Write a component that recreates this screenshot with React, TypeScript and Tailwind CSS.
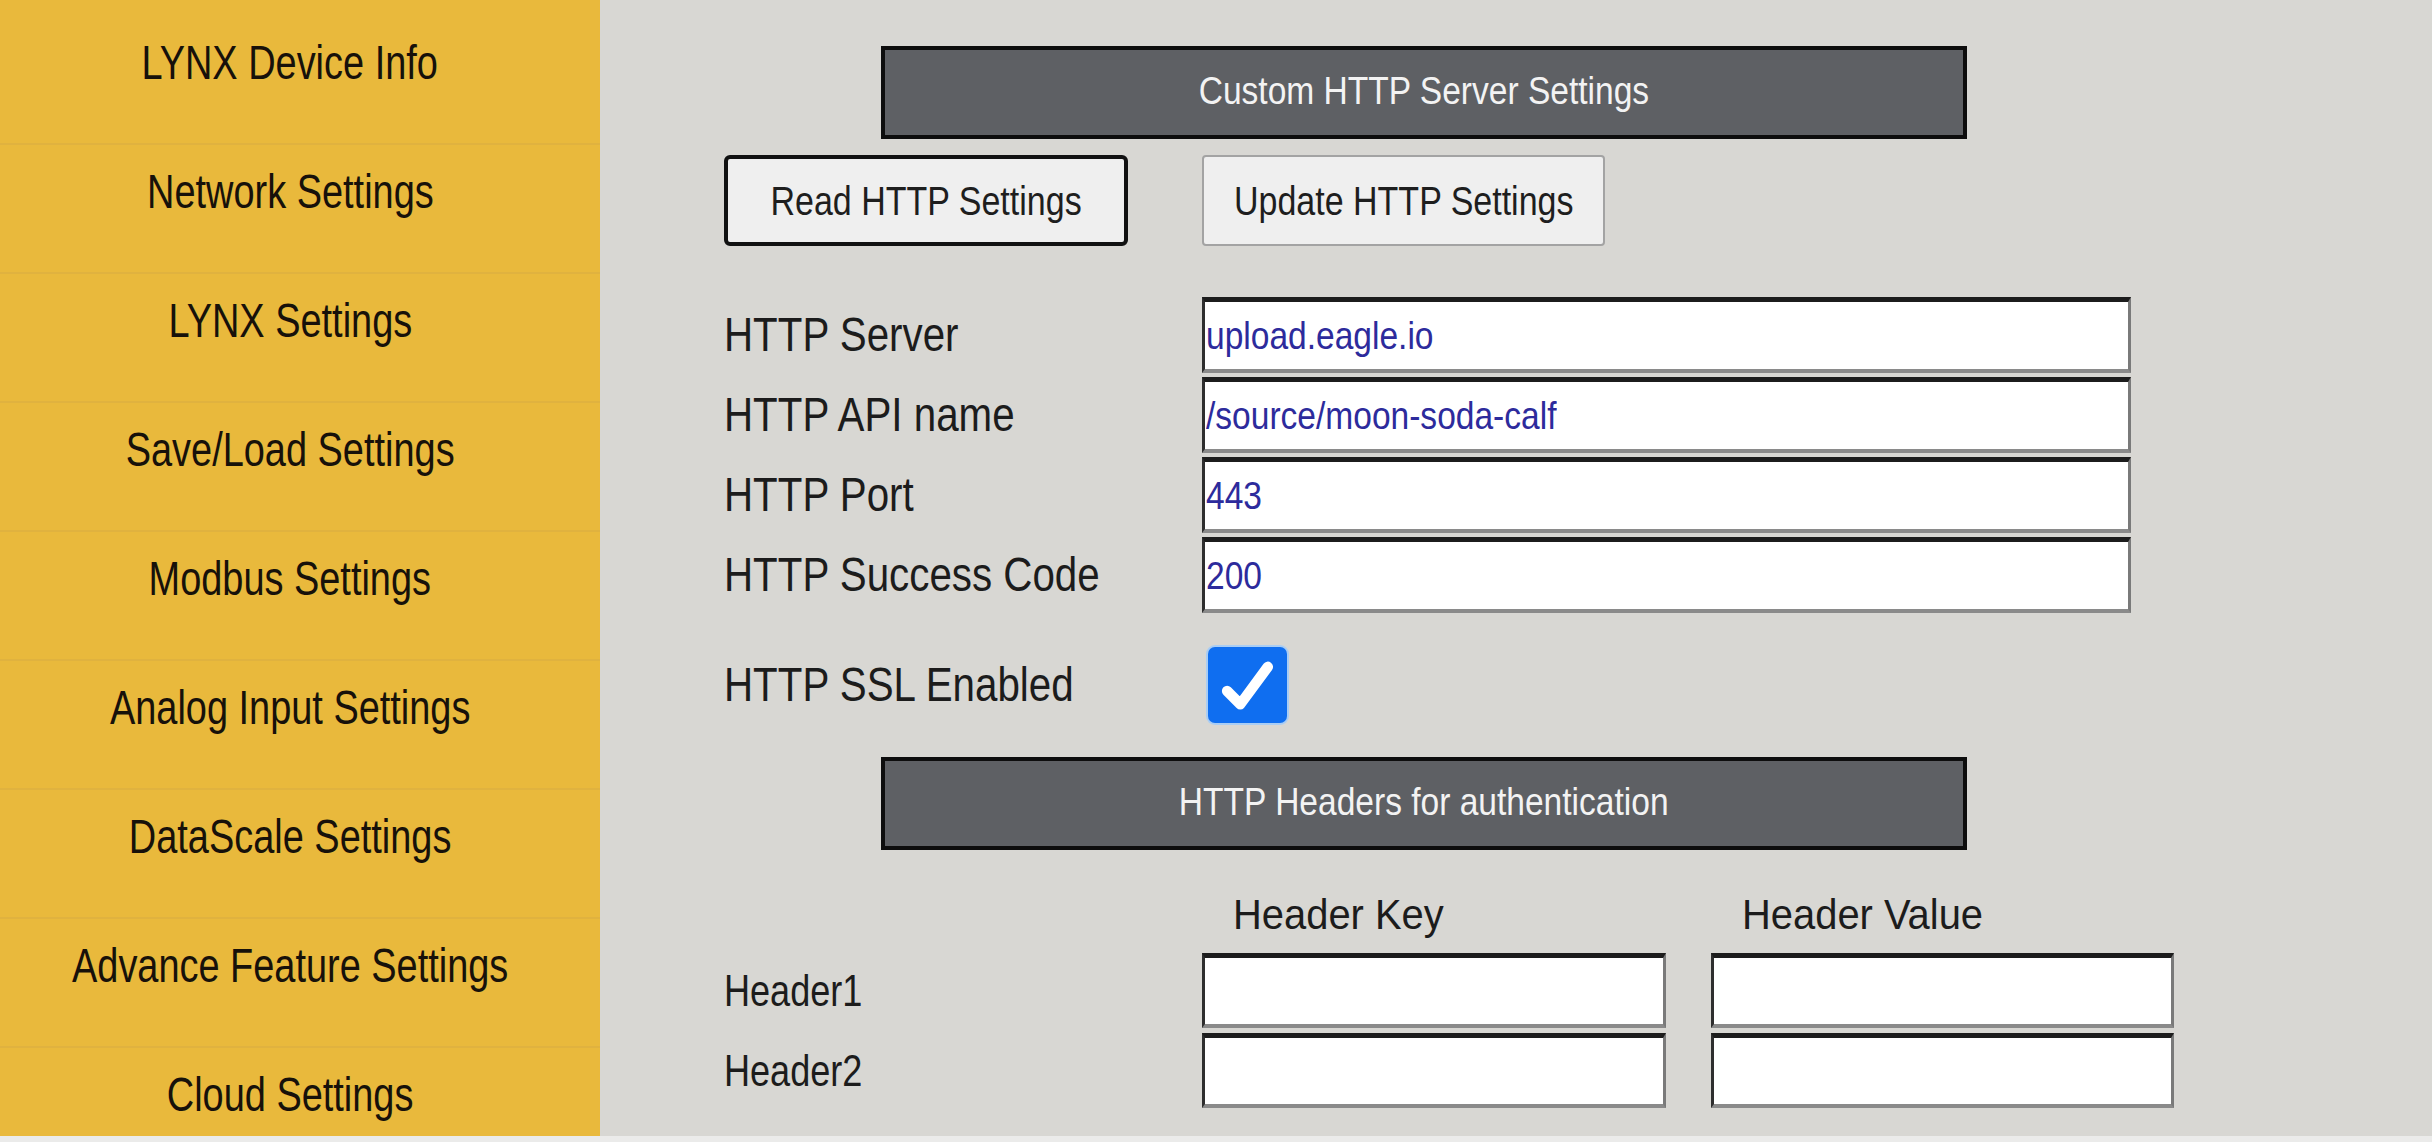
import React from "react";

const navItems = [
  "LYNX Device Info",
  "Network Settings",
  "LYNX Settings",
  "Save/Load Settings",
  "Modbus Settings",
  "Analog Input Settings",
  "DataScale Settings",
  "Advance Feature Settings",
  "Cloud Settings",
];

const fields = [
  { label: "HTTP Server", value: "upload.eagle.io" },
  { label: "HTTP API name", value: "/source/moon-soda-calf" },
  { label: "HTTP Port", value: "443" },
  { label: "HTTP Success Code", value: "200" },
];

function SectionBar({ title }: { title: string }) {
  return (
    <div className="ml-[157px] flex h-[93px] w-[1086px] items-center justify-center border-[4px] border-[#0d0d0d] bg-[#5e6064] pb-[3px]">
      <span className="inline-block whitespace-nowrap text-[39px] leading-[46px] text-[#f3f3f3] scale-x-[0.86]">
        {title}
      </span>
    </div>
  );
}

function TextBox({ value, className }: { value?: string; className: string }) {
  return (
    <div
      className={
        "flex items-center overflow-hidden border-t-[5px] border-l-[3px] border-r-[3px] border-b-[4px] border-t-[#1c1c1c] border-l-[#2e2e2e] border-r-[#7a7a7a] border-b-[#8a8a8a] bg-white pl-[1px] " +
        className
      }
    >
      {value ? (
        <span className="inline-block origin-left whitespace-nowrap text-[39px] leading-[46px] text-[#2d2b9c] scale-x-[0.86]">
          {value}
        </span>
      ) : null}
    </div>
  );
}

function Label({ children, size }: { children: React.ReactNode; size: "lg" | "sm" }) {
  return (
    <span
      className={
        size === "lg"
          ? "inline-block origin-left whitespace-nowrap text-[48px] leading-[56px] text-[#1c1c1c] scale-x-[0.84]"
          : "inline-block origin-left whitespace-nowrap text-[44px] leading-[52px] text-[#1c1c1c] scale-x-[0.82]"
      }
    >
      {children}
    </span>
  );
}

export default function App() {
  return (
    <div className="flex h-[1142px] w-[2432px] overflow-hidden border-b-[6px] border-[#ebebea] font-['Liberation_Sans',Arial,sans-serif]">
      <aside className="w-[600px] shrink-0 bg-[#e9b93c] pt-[16px]">
        {navItems.map((item) => (
          <div
            key={item}
            className="flex h-[129px] justify-center border-b-[2px] border-[#e0b23f] pr-[20px] pt-[19px]"
          >
            <span className="inline-block whitespace-nowrap text-[48px] leading-[56px] text-[#17110a] scale-x-[0.79]">
              {item}
            </span>
          </div>
        ))}
      </aside>

      <main className="flex-1 bg-[#d8d7d3] pl-[124px] pt-[46px]">
        <SectionBar title="Custom HTTP Server Settings" />

        <div className="mt-[16px] flex gap-[74px]">
          <button className="flex h-[91px] w-[404px] items-center justify-center rounded-[6px] border-[4px] border-[#111111] bg-[#efefef]">
            <span className="inline-block whitespace-nowrap text-[40px] leading-[46px] text-[#1e1e1e] scale-x-[0.85]">
              Read HTTP Settings
            </span>
          </button>
          <button className="flex h-[91px] w-[403px] items-center justify-center rounded-[4px] border-[2px] border-[#a3a3a3] bg-[#efefef]">
            <span className="inline-block whitespace-nowrap text-[40px] leading-[46px] text-[#1e1e1e] scale-x-[0.85]">
              Update HTTP Settings
            </span>
          </button>
        </div>

        <div className="mt-[51px] flex flex-col gap-[4px]">
          {fields.map((f) => (
            <div key={f.label} className="flex h-[76px] items-center">
              <div className="w-[478px]">
                <Label size="lg">{f.label}</Label>
              </div>
              <TextBox value={f.value} className="h-full w-[929px]" />
            </div>
          ))}
        </div>

        <div className="mt-[34px] flex h-[76px] items-center">
          <div className="w-[478px]">
            <Label size="lg">HTTP SSL Enabled</Label>
          </div>
          <div className="ml-[6px] flex h-[76px] w-[79px] items-center justify-center rounded-[7px] bg-[#0f6ef0] shadow-[0_0_0_2px_#a9cdf4]">
            <svg viewBox="0 0 24 24" className="h-[66px] w-[66px]" fill="none">
              <path
                d="M4.4 14.2 L9.2 19 L19.2 5.4"
                stroke="white"
                strokeWidth="3.8"
                strokeLinecap="round"
                strokeLinejoin="round"
              />
            </svg>
          </div>
        </div>

        <div className="mt-[34px]">
          <SectionBar title="HTTP Headers for authentication" />
        </div>

        <div className="mt-[40px] flex h-[50px] items-center">
          <div className="w-[478px]" />
          <div className="w-[464px] pl-[31px]">
            <span className="inline-block origin-left whitespace-nowrap text-[42px] leading-[50px] text-[#1c1c1c] scale-x-[0.95]">
              Header Key
            </span>
          </div>
          <div className="ml-[45px] w-[463px] pl-[31px]">
            <span className="inline-block origin-left whitespace-nowrap text-[42px] leading-[50px] text-[#1c1c1c] scale-x-[0.95]">
              Header Value
            </span>
          </div>
        </div>

        <div className="mt-[13px] flex flex-col gap-[5px]">
          {["Header1", "Header2"].map((h) => (
            <div key={h} className="flex h-[75px] items-center">
              <div className="w-[478px]">
                <Label size="sm">{h}</Label>
              </div>
              <TextBox className="h-full w-[464px]" />
              <TextBox className="ml-[45px] h-full w-[463px]" />
            </div>
          ))}
        </div>
      </main>
    </div>
  );
}
